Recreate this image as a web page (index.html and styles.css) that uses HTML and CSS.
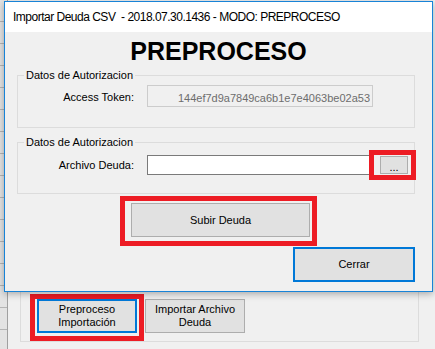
FILE: index.html
```html
<!DOCTYPE html>
<html lang="es">
<head>
  <meta charset="UTF-8">
  <meta name="viewport" content="width=device-width, initial-scale=1.0">
  <title>Importar Deuda CSV</title>
  <link rel="stylesheet" href="styles.css">
</head>
<body>
  <div class="desktop">
    <div class="grid-strip"></div>
    <div class="parent-area">
      <div class="parent-group">
        <span class="marked">
          <button class="btn btn-big btn-focus">Preproceso<br>Importación</button>
          <span class="mark mark-pre"></span>
        </span>
        <button class="btn btn-big">Importar Archivo<br>Deuda</button>
      </div>
    </div>
  </div>

  <div class="dialog">
    <div class="titlebar">Importar Deuda CSV&nbsp; - 2018.07.30.1436 - MODO: PREPROCESO</div>
    <div class="client">
      <h1 class="heading">PREPROCESO</h1>

      <div class="group group-token">
        <div class="group-title">Datos de Autorizacion</div>
        <div class="row row-token">
          <label class="label" for="token">Access Token:</label>
          <input class="field field-token" id="token" type="text" value="144ef7d9a7849ca6b1e7e4063be02a53" disabled>
        </div>
      </div>

      <div class="group group-file">
        <div class="group-title">Datos de Autorizacion</div>
        <div class="row row-file">
          <label class="label" for="archivo">Archivo Deuda:</label>
          <input class="field field-file" id="archivo" type="text">
          <span class="marked marked-browse">
            <button class="btn btn-browse">...</button>
            <span class="mark mark-browse"></span>
          </span>
        </div>
      </div>

      <div class="submit-row">
        <span class="marked">
          <button class="btn btn-submit">Subir Deuda</button>
          <span class="mark mark-submit"></span>
        </span>
      </div>

      <div class="close-row">
        <button class="btn btn-close btn-focus">Cerrar</button>
      </div>
    </div>
  </div>
</body>
</html>
```

FILE: styles.css
```css
body {
  margin: 0;
  width: 435px;
  height: 349px;
  overflow: hidden;
  position: relative;
  font-family: "Liberation Sans", Arial, sans-serif;
  font-size: 11px;
  color: #000;
  background-color: #f0f0f0;
}

/* window behind the dialog */
.desktop {
  display: flex;
  height: 349px;
}

.grid-strip {
  width: 7px;
  border-right: 1px solid #a0a0a0;
  background: repeating-linear-gradient(to bottom, #e3e3e3 0 21px, #b4b4b4 21px 22px);
}

.parent-area {
  flex: 1;
  padding: 200px 0 0 12px;
}

.parent-group {
  width: 399px;
  height: 142px;
  box-sizing: border-box;
  border: 1px solid #dcdcdc;
  display: flex;
  align-items: flex-end;
  gap: 8px;
  padding: 0 0 8px 16px;
}

/* buttons */
.btn {
  font-family: inherit;
  font-size: 11px;
  line-height: 13px;
  color: #000;
  background-color: #e1e1e1;
  border: 1px solid #adadad;
  border-radius: 0;
  padding: 0;
  margin: 0;
  box-sizing: border-box;
}

.btn-focus {
  border: 2px solid #0078d7;
}

.btn-big {
  width: 100px;
  height: 34px;
}

.btn-browse {
  width: 28px;
  height: 18px;
  margin-top: 1px;
  line-height: 12px;
  padding-top: 3px;
}

.btn-submit {
  width: 179px;
  height: 34px;
}

.btn-close {
  width: 122px;
  height: 35px;
}

/* red annotation frames */
.marked {
  position: relative;
  display: inline-flex;
}

.mark {
  position: absolute;
  border: 5px solid #ed1c24;
  pointer-events: none;
}

.mark-pre {
  left: -7px;
  top: -5px;
  right: -7px;
  bottom: -8px;
}

.mark-browse {
  left: -11px;
  top: -5px;
  right: -8px;
  bottom: -6px;
}

.mark-submit {
  left: -11px;
  top: -7px;
  right: -7px;
  bottom: -9px;
}

/* dialog */
.dialog {
  position: absolute;
  left: 4px;
  top: 1px;
  width: 427px;
  border: 1px solid #1883d7;
  background-color: #f0f0f0;
  box-shadow: 0 2px 7px rgba(0, 0, 0, 0.3);
}

.titlebar {
  height: 30px;
  line-height: 30px;
  padding-left: 8px;
  background-color: #fff;
  font-size: 12px;
  letter-spacing: -0.5px;
  white-space: nowrap;
}

.client {
  height: 259px;
  box-sizing: border-box;
  padding-top: 5px;
}

.heading {
  margin: 0;
  font-size: 25px;
  font-weight: bold;
  line-height: 28px;
  text-align: center;
}

.group {
  margin: 10px 17px 0 12px;
  border: 1px solid #dcdcdc;
  box-sizing: border-box;
  height: 53px;
}

.group-file {
  margin-top: 14px;
  height: 52px;
}

.group-title {
  width: max-content;
  margin: -7px 0 0 6px;
  padding: 0 2px;
  line-height: 13px;
  background-color: #f0f0f0;
}

.row {
  display: flex;
}

.row-token {
  margin-top: 3px;
  height: 22px;
}

.row-file {
  margin-top: 6px;
  height: 20px;
}

.label {
  width: 116px;
  margin-right: 13px;
  text-align: right;
  line-height: 20px;
}

.row-token .label {
  padding-top: 4px;
  line-height: 17px;
}

.field {
  font-family: inherit;
  font-size: 11px;
  margin: 0;
  box-sizing: border-box;
  border-radius: 0;
  outline: none;
}

.field-token {
  width: 226px;
  height: 22px;
  padding: 3px 2px 0 0;
  border: 1px solid #cccccc;
  background-color: #f0f0f0;
  color: #6d6d6d;
  text-align: right;
}

.field-file {
  width: 227px;
  height: 20px;
  padding: 0 2px;
  border: 1px solid #7a7a7a;
  background-color: #fff;
}

.marked-browse {
  margin-left: 6px;
  align-self: flex-start;
}

.submit-row {
  display: flex;
  margin-top: 9px;
  padding-left: 126px;
}

.close-row {
  display: flex;
  justify-content: flex-end;
  margin: 10px 17px 0 0;
}
```
